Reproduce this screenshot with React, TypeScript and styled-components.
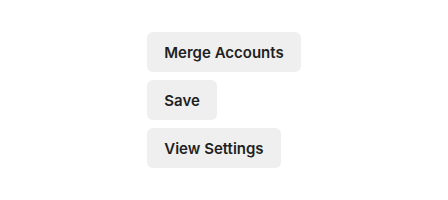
import React from "react";
import styled, { createGlobalStyle } from "styled-components";

const GlobalStyle = createGlobalStyle`
  html, body {
    margin: 0;
    padding: 0;
    background: #ffffff;
  }
`;

const Page = styled.main`
  align-items: center;
  display: flex;
  height: 200px;
  justify-content: center;
  width: 448px;
`;

const Stack = styled.div`
  align-items: flex-start;
  display: flex;
  flex-direction: column;
  gap: 8px;
`;

const Button = styled.button`
  background: #efefef;
  border: none;
  border-radius: 6px;
  color: #1f1f1f;
  cursor: pointer;
  font-family: Inter, "Open Sans", sans-serif;
  font-size: 15px;
  font-weight: 600;
  height: 40px;
  padding: 0 17px;
`;

const App = () => (
  <>
    <GlobalStyle />
    <Page>
      <Stack>
        <Button>Merge Accounts</Button>
        <Button>Save</Button>
        <Button>View Settings</Button>
      </Stack>
    </Page>
  </>
);

export default App;
